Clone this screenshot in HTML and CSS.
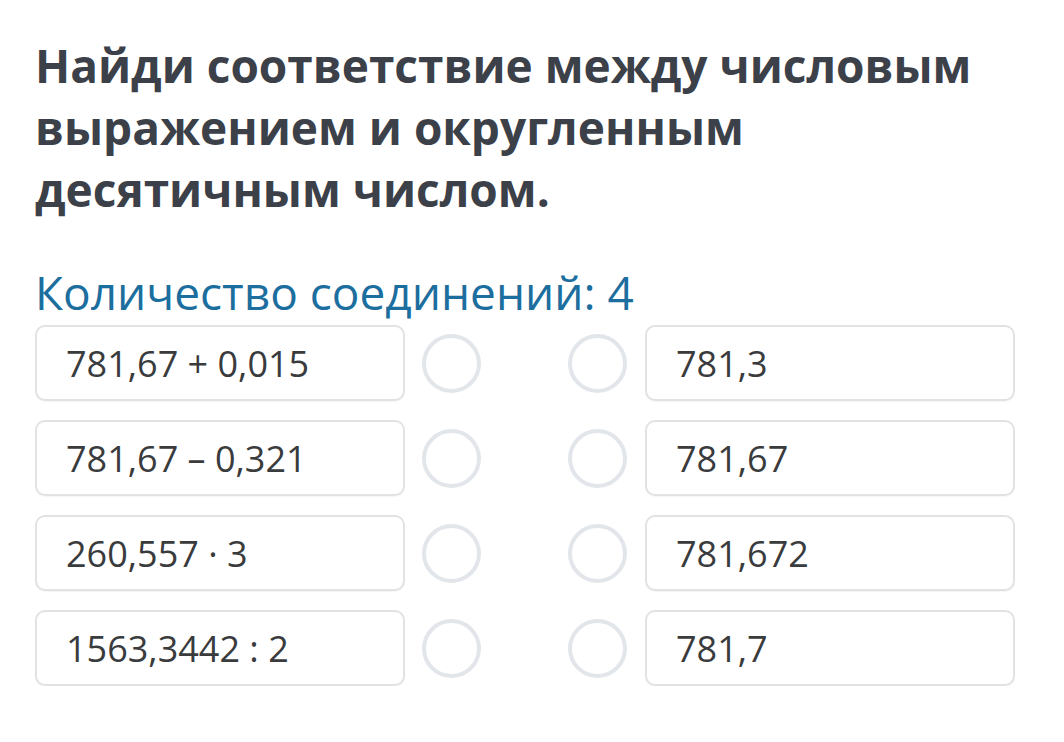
FILE: index.html
```html
<!DOCTYPE html>
<html>
<head>
  <title>Соответствие</title>
  <link rel="stylesheet" href="styles.css">
</head>
<body>

<div class="task">
  <h1 class="question">Найди соответствие между числовым выражением и округленным десятичным числом.</h1>

  <div class="count">Количество соединений: 4</div>

  <div class="match">
    <div class="item">781,67 + 0,015</div>
    <div class="dot-left"><span class="dot"></span></div>
    <div class="dot-right"><span class="dot"></span></div>
    <div class="item">781,3</div>

    <div class="item">781,67 – 0,321</div>
    <div class="dot-left"><span class="dot"></span></div>
    <div class="dot-right"><span class="dot"></span></div>
    <div class="item">781,67</div>

    <div class="item">260,557 · 3</div>
    <div class="dot-left"><span class="dot"></span></div>
    <div class="dot-right"><span class="dot"></span></div>
    <div class="item">781,672</div>

    <div class="item">1563,3442 : 2</div>
    <div class="dot-left"><span class="dot"></span></div>
    <div class="dot-right"><span class="dot"></span></div>
    <div class="item">781,7</div>
  </div>
</div>

</body>
</html>
```

FILE: styles.css
```css
body {
  font-family: "Open Sans", "Noto Sans", sans-serif;
  background: #ffffff;
  margin: 0;
}

.task {
  padding: 34px 49px 0 35px;
}

.question {
  margin: 0;
  font-size: 46px;
  line-height: 62px;
  font-weight: 700;
  color: #3c4149;
  width: 960px;
}

.count {
  margin-top: 44px;
  font-size: 46px;
  line-height: 56px;
  color: #1c6e9e;
}

.match {
  margin-top: 5px;
  display: grid;
  grid-template-columns: 370px 1fr 1fr 370px;
  row-gap: 19px;
}

.item {
  height: 76px;
  box-sizing: border-box;
  border: 2px solid #e1e2e4;
  border-radius: 10px;
  box-shadow: 0 1px 1px rgba(0, 0, 0, 0.04);
  padding-left: 29px;
  display: flex;
  align-items: center;
  font-size: 36px;
  color: #3a3b3d;
}

.dot-left, .dot-right {
  display: flex;
  align-items: center;
}

.dot-left {
  justify-content: flex-start;
  padding-left: 17px;
}

.dot-right {
  justify-content: flex-end;
  padding-right: 18px;
}

.dot {
  width: 59px;
  height: 59px;
  box-sizing: border-box;
  border: 4px solid #e2e6ea;
  border-radius: 50%;
}
```
